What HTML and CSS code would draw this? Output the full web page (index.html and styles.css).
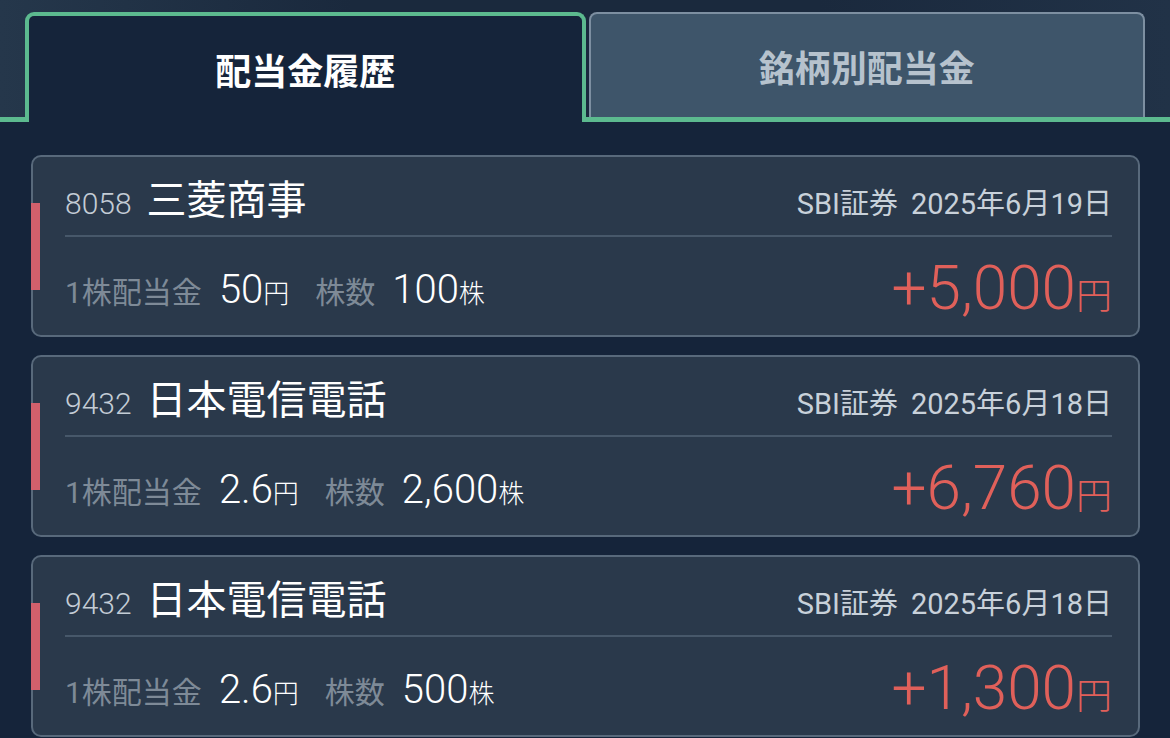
FILE: index.html
```html
<!DOCTYPE html>
<html lang="ja">
<head>
  <meta charset="UTF-8">
  <meta name="viewport" content="width=device-width, initial-scale=1.0">
  <title>配当金履歴</title>
  <link rel="stylesheet" href="styles.css">
</head>
<body>

<div class="tabs">
  <div class="tab tab-active">配当金履歴</div>
  <div class="tab">銘柄別配当金</div>
</div>

<div class="list">
  <div class="card">
    <div class="card-top">
      <div class="stock"><span class="code">8058</span><span class="name">三菱商事</span></div>
      <div class="meta"><span class="broker">SBI証券</span><span>2025年6月19日</span></div>
    </div>
    <div class="card-bottom">
      <div class="detail">
        <span class="label">1株配当金</span><span class="value">50<small>円</small></span>
        <span class="label">株数</span><span class="value">100<small>株</small></span>
      </div>
      <div class="amount">+5,000<small>円</small></div>
    </div>
  </div>

  <div class="card">
    <div class="card-top">
      <div class="stock"><span class="code">9432</span><span class="name">日本電信電話</span></div>
      <div class="meta"><span class="broker">SBI証券</span><span>2025年6月18日</span></div>
    </div>
    <div class="card-bottom">
      <div class="detail">
        <span class="label">1株配当金</span><span class="value">2.6<small>円</small></span>
        <span class="label">株数</span><span class="value">2,600<small>株</small></span>
      </div>
      <div class="amount">+6,760<small>円</small></div>
    </div>
  </div>

  <div class="card">
    <div class="card-top">
      <div class="stock"><span class="code">9432</span><span class="name">日本電信電話</span></div>
      <div class="meta"><span class="broker">SBI証券</span><span>2025年6月18日</span></div>
    </div>
    <div class="card-bottom">
      <div class="detail">
        <span class="label">1株配当金</span><span class="value">2.6<small>円</small></span>
        <span class="label">株数</span><span class="value">500<small>株</small></span>
      </div>
      <div class="amount">+1,300<small>円</small></div>
    </div>
  </div>
</div>

</body>
</html>
```

FILE: styles.css
```css
body {
  margin: 0;
  background-color: #15243a;
  font-family: Roboto, "Noto Sans CJK JP", sans-serif;
  overflow: hidden;
}

.tabs {
  display: flex;
  gap: 3px;
  padding: 12px 25px 0 25px;
  border-bottom: 5px solid #5cba8f;
  background: linear-gradient(90deg, #25374b 0%, #1a293d 30%, #1a293d 70%, #213247 100%);
}

.tab {
  flex: 1;
  height: 103px;
  display: flex;
  align-items: center;
  justify-content: center;
  font-family: "Noto Sans CJK JP", sans-serif;
  font-size: 36px;
  font-weight: 700;
  color: #b6c2cd;
  background-color: #3e556a;
  border: 2px solid #7d8fa1;
  border-bottom: none;
  border-radius: 8px 8px 0 0;
}

.tab-active {
  height: 106px;
  margin-bottom: -5px;
  color: #ffffff;
  background-color: #15243a;
  border: 4px solid #5cba8f;
  border-bottom: none;
  border-radius: 9px 9px 0 0;
}

.list {
  display: flex;
  flex-direction: column;
  gap: 18px;
  padding: 33px 30px 0 31px;
}

.card {
  position: relative;
  height: 178px;
  padding: 0 26px 0 32px;
  background-color: #2a394b;
  border: 2px solid #58697b;
  border-radius: 10px;
}

.card::before {
  content: "";
  position: absolute;
  left: -2px;
  top: 46px;
  width: 9px;
  height: 87px;
  background-color: #d2606c;
}

.card-top {
  display: flex;
  align-items: baseline;
  justify-content: space-between;
  height: 78px;
  border-bottom: 2px solid #47586a;
}

.stock {
  display: flex;
  align-items: baseline;
  padding-top: 16px;
}

.code {
  font-size: 30px;
  font-weight: 300;
  color: #c3ccd5;
  margin-right: 15px;
}

.name {
  font-family: "Noto Sans CJK JP", sans-serif;
  font-size: 40px;
  line-height: 48px;
  color: #ffffff;
}

.meta {
  font-size: 29px;
  color: #c8d1da;
}

.broker {
  margin-right: 13px;
}

.card-bottom {
  display: flex;
  align-items: baseline;
  justify-content: space-between;
  padding-top: 8px;
}

.detail {
  display: flex;
  align-items: baseline;
}

.label {
  font-size: 30px;
  color: #7e8a97;
  margin-right: 17px;
}

.value {
  font-size: 40px;
  font-weight: 300;
  color: #ffffff;
  margin-right: 26px;
}

.value small {
  font-size: 26px;
  font-family: "Noto Sans CJK JP", sans-serif;
}

.amount {
  font-size: 62px;
  font-weight: 300;
  color: #e0605a;
  position: relative;
  top: 6px;
}

.amount small {
  font-size: 36px;
  font-family: "Noto Sans CJK JP", sans-serif;
}
```
